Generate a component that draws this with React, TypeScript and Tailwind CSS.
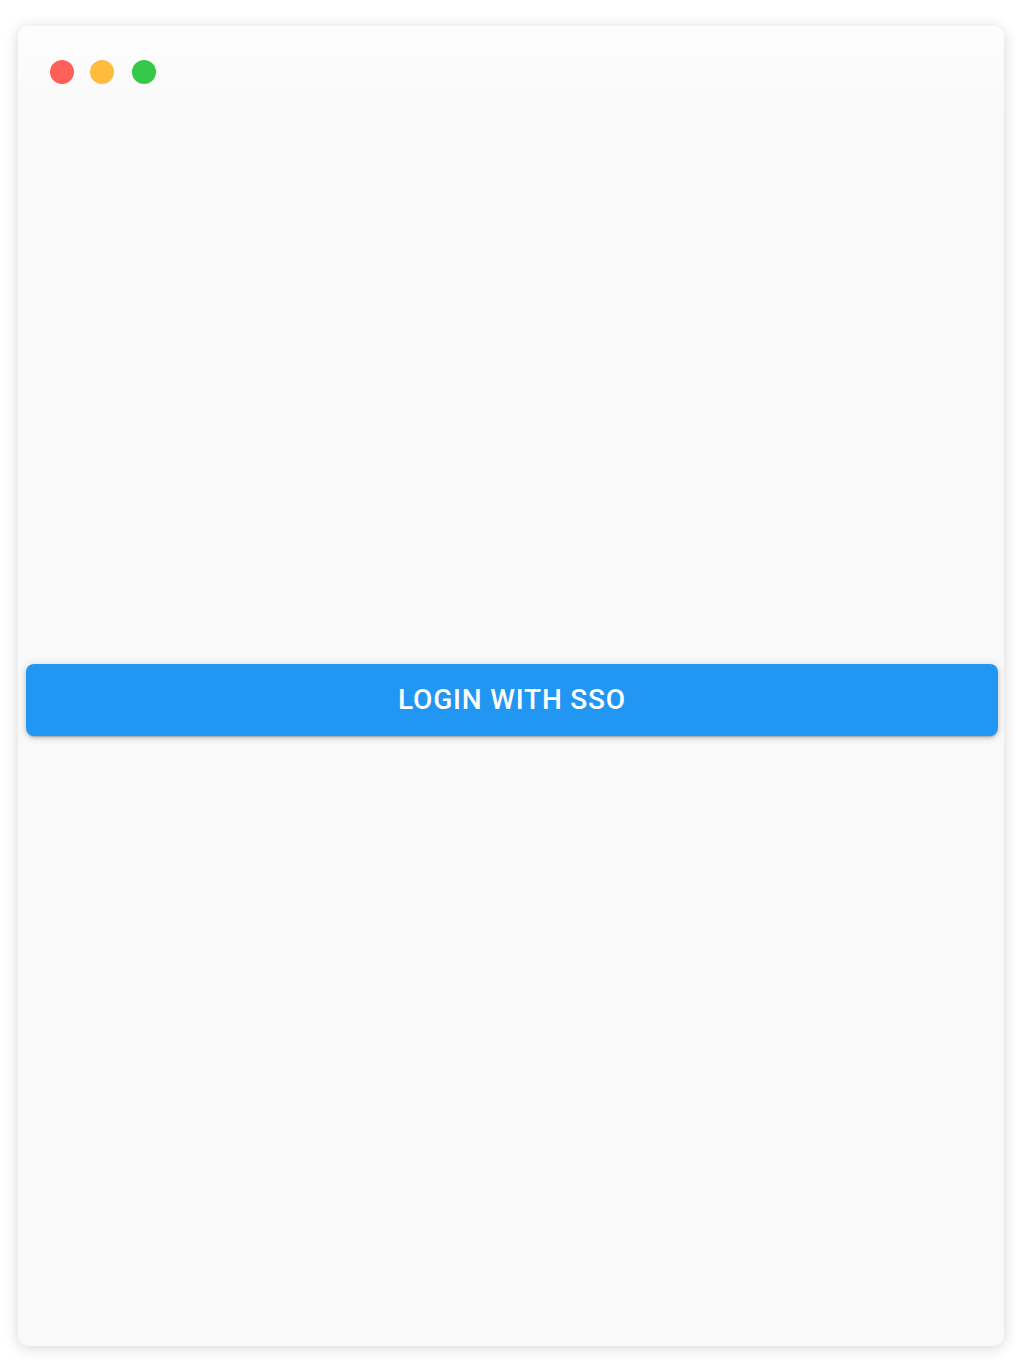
export default function App() {
  return (
    <div className="flex min-h-[1360px] w-full bg-white pb-[14px] pl-[18px] pr-[16px] pt-[26px]">
      <div className="flex w-full flex-col overflow-hidden rounded-[10px] bg-[#f9f9f9] shadow-[0_2px_14px_rgba(0,0,0,0.16)]">
        <div className="flex h-[92px] items-start gap-4 bg-gradient-to-b from-[#fdfdfd] to-[#f9f9f9] pl-8 pt-[34px]">
          <span className="h-6 w-6 rounded-full bg-[#ff6058]" />
          <span className="h-6 w-6 rounded-full bg-[#ffbb3e]" />
          <span className="ml-[2px] h-6 w-6 rounded-full bg-[#36c84a]" />
        </div>
        <div className="flex flex-1 flex-col justify-center pb-16 pl-2 pr-[6px]">
          <button
            type="button"
            className="h-[72px] w-full rounded-[8px] bg-[#2196f3] text-[28px] font-medium uppercase tracking-[0.8px] text-white shadow-[0_3px_2px_-2px_rgba(0,0,0,0.2),0_2px_4px_0_rgba(0,0,0,0.14),0_1px_10px_0_rgba(0,0,0,0.12)] [font-family:Roboto,'Liberation_Sans',sans-serif]"
          >
            Login with SSO
          </button>
        </div>
      </div>
    </div>
  );
}
